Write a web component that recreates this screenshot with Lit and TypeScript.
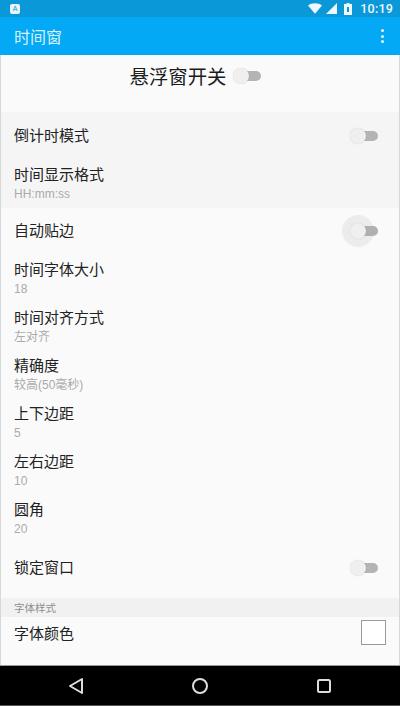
import { LitElement, html, css } from "lit";
import { customElement } from "lit/decorators.js";

const sw = (ripple = false) => html`<span class="sw ${ripple ? "ripple" : ""}"><i class="track"></i><i class="thumb"></i></span>`;
const two = (t: string, s: string) => html`<div class="two"><div class="t">${t}</div><div class="s">${s}</div></div>`;

@customElement("app-root")
export class AppRoot extends LitElement {
  static styles = css`
    :host { display: flex; flex-direction: column; width: 400px; height: 706px; overflow: hidden; background: #fafafa;
      font-family: "Liberation Sans", "Noto Sans CJK SC", sans-serif; color: #333; }
    .status { height: 17px; background: #0a98d8; display: flex; align-items: center; padding: 0 7px 0 10px; gap: 4px; color: #eef8fd; flex: none; }
    .status .a { width: 10px; height: 10px; background: #e8f5fb; border-radius: 2px; font-size: 7px; color: #0a98d8; text-align: center; line-height: 10px; margin-right: auto; }
    .time { font-size: 12.5px; font-weight: 500; margin-left: 4px; font-family: Roboto, sans-serif; letter-spacing: .2px; }
    .bar { height: 38px; background: #03a9f4; color: #d8f1fd; display: flex; align-items: center; justify-content: space-between; padding: 0 16px 0 14px; font-size: 16px; flex: none; box-sizing: border-box; }
    .dots { display: flex; flex-direction: column; gap: 2.5px; }
    .dots i { width: 3px; height: 3px; border-radius: 50%; background: #e6f6fe; }
    .main { flex: 1; display: flex; flex-direction: column; border-left: 1px solid #d4dadb; border-right: 1px solid #d4dadb; min-height: 0; }
    .master { height: 57px; flex: none; display: flex; align-items: center; justify-content: center; gap: 7px; font-size: 19.4px; color: #1c1c1c; padding: 0 9px 17px 0; box-sizing: border-box; }
    .master .sw { margin-top: 2px; }
    .row { display: flex; align-items: center; justify-content: space-between; padding: 0 21px 0 13px; box-sizing: border-box; font-size: 15px; color: #222; flex: none; }
    .lab { margin-bottom: 3px; }
    .h48 { height: 48px; }
    .short { height: 46px; }
    .gap { margin-top: 1px; }
    .last { height: 34px; }
    .gray { background: #f5f5f5; }
    .two { display: flex; flex-direction: column; gap: 3px; margin-top: -1px; }
    .t { font-size: 15px; line-height: 17px; color: #222; }
    .s { font-size: 12px; line-height: 16px; color: #aaa; }
    .sec { height: 19px; flex: none; background: #f1f1f1; font-size: 10.5px; color: #8e8e8e; display: flex; align-items: center; padding-left: 13px; margin-top: 6px; }
    .box { width: 25px; height: 25px; box-sizing: border-box; border: 1px solid #9a9a9a; background: #fff; margin: 0 -8px 3px 0; }
    .sw { position: relative; width: 28px; height: 16px; display: block; }
    .track { position: absolute; left: 4px; top: 3px; width: 24px; height: 10px; border-radius: 5px; background: #b4b4b4; }
    .thumb { position: absolute; left: 0; top: 0; width: 16px; height: 16px; border-radius: 50%; background: #efefef; box-shadow: 0 0 1px rgba(0,0,0,.2); }
    .ripple::before { content: ""; position: absolute; left: -8px; top: -8px; width: 32px; height: 32px; border-radius: 50%; background: #ececec; }
    .ripple .track { background: #b0b0b0; }
    .nav { height: 41px; flex: none; background: #000; border-top: 1px solid #999; border-bottom: 1px solid #555; box-sizing: border-box; display: flex; align-items: center; }
    .nav span { flex: none; display: flex; justify-content: center; width: 124px; }
    .nav span:first-child { margin-left: 14px; }
  `;

  render() {
    return html`
      <div class="status">
        <span class="a">A</span>
        <svg width="14" height="11" viewBox="0 0 16 12"><path d="M0 2.5C4-.8 12-.8 16 2.5L8 12z" fill="currentColor"/></svg>
        <svg width="11" height="11" viewBox="0 0 12 12"><path d="M12 0v12H0z" fill="currentColor"/></svg>
        <svg width="8" height="12" viewBox="0 0 8 12" style="margin-left:3px"><path d="M2.5 0h3v1H8v11H0V1h2.5z" fill="currentColor"/><path d="M3 4h2v5H3z" fill="#0a98d8"/></svg>
        <span class="time">10:19</span>
      </div>
      <div class="bar"><span>时间窗</span><span class="dots"><i></i><i></i><i></i></span></div>
      <div class="main">
        <div class="master"><span>悬浮窗开关</span>${sw()}</div>
        <div class="gray">
          <div class="row h48"><span class="lab">倒计时模式</span>${sw()}</div>
          <div class="row h48">${two("时间显示格式", "HH:mm:ss")}</div>
        </div>
        <div class="row short"><span class="lab">自动贴边</span>${sw(true)}</div>
        <div class="row h48 gap">${two("时间字体大小", "18")}</div>
        <div class="row h48">${two("时间对齐方式", "左对齐")}</div>
        <div class="row h48">${two("精确度", "较高(50毫秒)")}</div>
        <div class="row h48">${two("上下边距", "5")}</div>
        <div class="row h48">${two("左右边距", "10")}</div>
        <div class="row h48">${two("圆角", "20")}</div>
        <div class="row h48 gap"><span class="lab">锁定窗口</span>${sw()}</div>
        <div class="sec">字体样式</div>
        <div class="row last"><span class="lab">字体颜色</span><span class="box"></span></div>
      </div>
      <div class="nav">
        <span><svg width="16" height="18" viewBox="0 0 16 18"><path d="M14 2v14L2 9z" fill="none" stroke="#ddd" stroke-width="2" stroke-linejoin="round"/></svg></span>
        <span><svg width="18" height="18" viewBox="0 0 18 18"><circle cx="9" cy="9" r="7" fill="none" stroke="#ddd" stroke-width="2"/></svg></span>
        <span><svg width="16" height="16" viewBox="0 0 16 16"><rect x="2" y="2" width="12" height="12" rx="1.5" fill="none" stroke="#ddd" stroke-width="2"/></svg></span>
      </div>`;
  }
}
